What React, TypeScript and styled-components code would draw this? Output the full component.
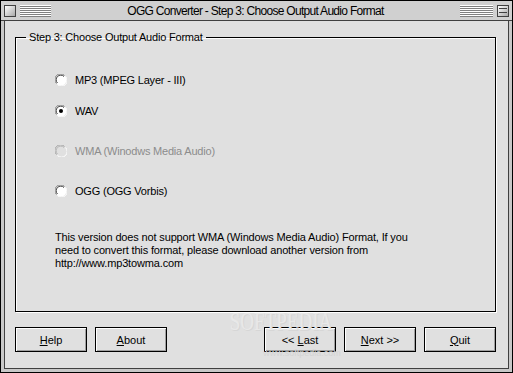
import React, { useState } from "react";
import styled, { createGlobalStyle } from "styled-components";

const GlobalStyle = createGlobalStyle`
	html, body {
		margin: 0;
		padding: 0;
		background: #ffffff;
	}
	body {
		font-family: "Liberation Sans", Arial, sans-serif;
	}
`;

const Window = styled.div`
	position: relative;
	width: 513px;
	height: 373px;
	box-sizing: border-box;
	border: 1px solid #000;
	background: #c8c8c8;
	display: flex;
	flex-direction: column;
	overflow: hidden;
`;

const TitleBar = styled.div`
	height: 19px;
	border-bottom: 1px solid #404040;
	background: #d0d0d0;
	display: flex;
	align-items: center;
	padding: 0 3px;
	gap: 4px;
`;

const TitleText = styled.div`
	flex: 1;
	text-align: center;
	font-size: 12px;
	letter-spacing: -0.7px;
	color: #000;
	white-space: nowrap;
`;

const BoxButton = styled.div`
	width: 10px;
	height: 10px;
	border: 1px solid #404040;
	background: linear-gradient(135deg, #ffffff 0%, #a8a8a8 100%);
	flex: none;
	display: flex;
	flex-direction: column;
	justify-content: space-evenly;
	box-sizing: content-box;
`;

const ZoomLine = styled.div`
	height: 1px;
	background: #404040;
	margin: 0 1px;
`;

const Stripes = styled.div<{ $w: number }>`
	width: ${(p) => p.$w}px;
	height: 12px;
	flex: none;
	background: repeating-linear-gradient(
		to bottom,
		#ffffff 0px,
		#ffffff 1px,
		#808080 1px,
		#808080 2px
	);
`;

const Frame = styled.div`
	flex: 1;
	padding: 0 3px 3px 3px;
	display: flex;
`;

const Client = styled.div`
	flex: 1;
	border: 1px solid #404040;
	border-top: none;
	background: #e0e0e0;
	padding: 10px 12px 0 10px;
	display: flex;
	flex-direction: column;
	font-size: 11px;
	color: #000;
`;

const Group = styled.fieldset`
	margin: 0;
	height: 281px;
	box-sizing: border-box;
	border: 1px solid #000;
	box-shadow: 1px 1px 0 #ffffff, inset 1px 1px 0 #ffffff;
	padding: 0;
	display: flex;
	flex-direction: column;
`;

const Legend = styled.legend`
	padding: 0 3px;
	margin-left: 10px;
	font-size: 11px;
	letter-spacing: -0.2px;
	line-height: 12px;
`;

const Options = styled.div`
	display: flex;
	flex-direction: column;
	padding: 31px 0 0 39px;
`;

const OptionRow = styled.label<{ $gap: number; $disabled?: boolean }>`
	display: flex;
	align-items: center;
	gap: 8px;
	height: 12px;
	margin-bottom: ${(p) => p.$gap}px;
	color: ${(p) => (p.$disabled ? "#8c8c8c" : "#000")};
	font-size: 11px;
	letter-spacing: -0.2px;
	cursor: default;
`;

const Note = styled.p`
	margin: 34px 0 0 39px;
	font-size: 11px;
	line-height: 13px;
	letter-spacing: -0.15px;
`;

const ButtonRow = styled.div`
	display: flex;
	justify-content: space-between;
	margin-top: 15px;
`;

const ButtonGroup = styled.div`
	display: flex;
	gap: 8px;
`;

const PushButton = styled.button`
	width: 72px;
	height: 25px;
	box-sizing: border-box;
	border: 1px solid #000;
	background: #e0e0e0;
	box-shadow: inset 1px 1px 0 #ffffff, inset -1px -1px 0 #a0a0a0;
	font-family: "Liberation Sans", Arial, sans-serif;
	font-size: 11px;
	color: #000;
	padding: 0;
	cursor: default;

	& u {
		text-decoration: underline;
		text-underline-offset: 1px;
	}
`;

const Watermark = styled.div`
	position: absolute;
	left: 214px;
	top: 312px;
	width: 132px;
	pointer-events: none;
	display: flex;
	flex-direction: column;
	align-items: center;
`;

const WatermarkLogo = styled.div`
	font-family: "Liberation Serif", serif;
	font-size: 19px;
	line-height: 18px;
	transform: scaleY(1.3);
	color: #e8e8e8;
	text-shadow: 1px 1px 0 #d6d6d6;
`;

const WatermarkUrl = styled.div`
	font-size: 9px;
	line-height: 9px;
	color: #d4d4d4;
	margin-top: 18px;
	margin-left: 42px;
`;

const Radio = ({ checked, disabled }: { checked: boolean; disabled?: boolean }) => (
	<svg width="12" height="12" viewBox="0 0 12 12">
		<circle cx="6" cy="6" r="5.5" fill={disabled ? "#e0e0e0" : "#ffffff"} />
		<path d="M1.5 9.5 A5.5 5.5 0 0 1 9.5 1.5" fill="none" stroke={disabled ? "#a0a0a0" : "#808080"} strokeWidth="1" />
		<path d="M2.5 9 A4.3 4.3 0 0 1 9 2.5" fill="none" stroke={disabled ? "#b8b8b8" : "#404040"} strokeWidth="1" />
		<path d="M10.5 2.5 A5.5 5.5 0 0 1 2.5 10.5" fill="none" stroke="#ffffff" strokeWidth="1" />
		{checked && <circle cx="6" cy="6" r="2" fill="#000" />}
	</svg>
);

const formats = [
	{ id: "mp3", label: "MP3 (MPEG Layer - III)", gap: 19 },
	{ id: "wav", label: "WAV", gap: 28 },
	{ id: "wma", label: "WMA (Winodws Media Audio)", gap: 28, disabled: true },
	{ id: "ogg", label: "OGG (OGG Vorbis)", gap: 0 },
];

const App = () => {
	const [format, setFormat] = useState<string>("wav");

	return (
		<>
			<GlobalStyle />
			<Window>
				<TitleBar>
					<BoxButton />
					<Stripes $w={31} />
					<TitleText>OGG Converter - Step 3: Choose Output Audio Format</TitleText>
					<Stripes $w={33} />
					<BoxButton>
						<ZoomLine />
						<ZoomLine />
					</BoxButton>
				</TitleBar>
				<Frame>
					<Client>
						<Group>
							<Legend>Step 3: Choose Output Audio Format</Legend>
							<Options>
								{formats.map((f) => (
									<OptionRow
										key={f.id}
										$gap={f.gap}
										$disabled={f.disabled}
										onClick={() => !f.disabled && setFormat(f.id)}
									>
										<Radio checked={format === f.id} disabled={f.disabled} />
										{f.label}
									</OptionRow>
								))}
							</Options>
							<Note>
								This version does not support WMA (Windows Media Audio) Format, If you
								<br />
								need to convert this format, please download another version from
								<br />
								http://www.mp3towma.com
							</Note>
						</Group>
						<ButtonRow>
							<ButtonGroup>
								<PushButton><u>H</u>elp</PushButton>
								<PushButton><u>A</u>bout</PushButton>
							</ButtonGroup>
							<ButtonGroup>
								<PushButton>&lt;&lt; <u>L</u>ast</PushButton>
								<PushButton><u>N</u>ext &gt;&gt;</PushButton>
								<PushButton><u>Q</u>uit</PushButton>
							</ButtonGroup>
						</ButtonRow>
					</Client>
				</Frame>
				<Watermark>
					<WatermarkLogo>SOFTPEDIA</WatermarkLogo>
					<WatermarkUrl>www.softpedia.com</WatermarkUrl>
				</Watermark>
			</Window>
		</>
	);
};

export default App;
